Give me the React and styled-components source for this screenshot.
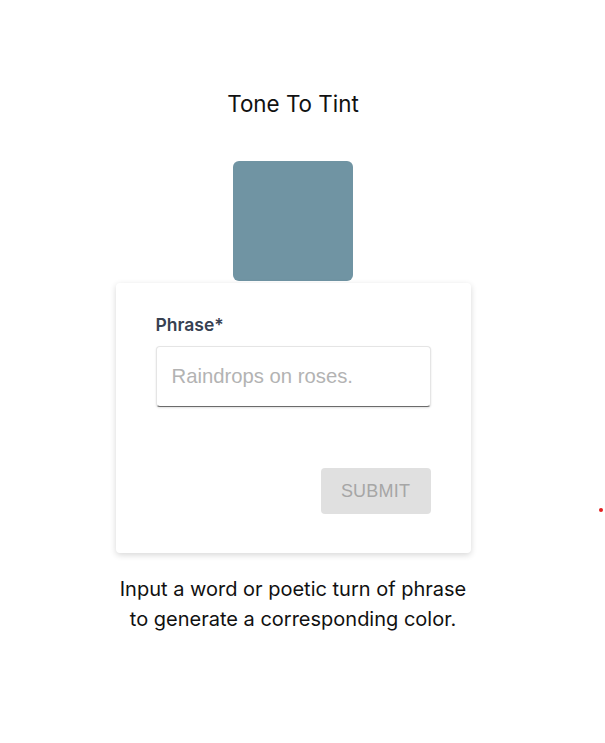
import React, { useState } from 'react';
import styled, { createGlobalStyle } from 'styled-components';

const GlobalStyle = createGlobalStyle`
  html, body {
    margin: 0;
    padding: 0;
    background: #ffffff;
  }
  body {
    font-family: Inter, 'Noto Sans', sans-serif;
  }
`;

const Page = styled.div`
  position: relative;
  width: 586px;
  min-height: 743px;
  display: flex;
  flex-direction: column;
  align-items: center;
  padding-top: 88px;
  box-sizing: border-box;
`;

const Title = styled.h1`
  margin: 0;
  font-family: Inter, sans-serif;
  font-weight: 400;
  font-size: 22.4px;
  line-height: 32px;
  color: #111111;
`;

const Swatch = styled.div`
  width: 120px;
  height: 120px;
  margin-top: 41px;
  border-radius: 6px;
  background: ${props => props.color};
`;

const Card = styled.form`
  width: 355px;
  margin-top: 2px;
  padding: 31px 40px 39px;
  box-sizing: border-box;
  background: #ffffff;
  border-radius: 4px;
  box-shadow: 0 2px 6px rgba(0, 0, 0, 0.16);
  display: flex;
  flex-direction: column;
`;

const Label = styled.label`
  font-family: Inter, sans-serif;
  font-weight: 600;
  font-size: 17.5px;
  line-height: 21px;
  color: #374151;
`;

const TextInput = styled.input`
  margin-top: 11px;
  height: 61px;
  padding: 0 15px;
  box-sizing: border-box;
  border: 1px solid #e5e5e5;
  border-bottom: 1px solid #6b6b6b;
  border-radius: 4px;
  font-family: 'Liberation Sans', Arial, sans-serif;
  font-size: 20.3px;
  color: #222;
  outline: none;
  box-shadow: 0 1px 2px rgba(0, 0, 0, 0.12);

  &::placeholder {
    color: #b3b3b3;
  }
`;

const Actions = styled.div`
  display: flex;
  justify-content: flex-end;
  margin-top: 61px;
`;

const SubmitButton = styled.button`
  width: 110px;
  height: 46px;
  border: none;
  border-radius: 4px;
  background: #e0e0e0;
  color: #a6a6a6;
  font-family: 'Liberation Sans', Arial, sans-serif;
  font-size: 18px;
  letter-spacing: 0.2px;
  cursor: default;
`;

const Description = styled.p`
  margin: 21px 0 0;
  font-family: Inter, sans-serif;
  font-size: 20px;
  line-height: 30px;
  text-align: center;
  color: #111111;
`;

const Dot = styled.span`
  position: absolute;
  left: 599px;
  top: 508px;
  width: 4px;
  height: 4px;
  border-radius: 50%;
  background: #e02020;
`;

export default function App() {
  const [phrase, setPhrase] = useState('');

  return (
    <>
      <GlobalStyle />
      <Page>
        <Title>Tone To Tint</Title>
        <Swatch color="#7094a3" />
        <Card onSubmit={e => e.preventDefault()}>
          <Label htmlFor="phrase">Phrase*</Label>
          <TextInput
            id="phrase"
            value={phrase}
            onChange={e => setPhrase(e.target.value)}
            placeholder="Raindrops on roses."
          />
          <Actions>
            <SubmitButton type="submit" disabled={!phrase}>SUBMIT</SubmitButton>
          </Actions>
        </Card>
        <Description>
          Input a word or poetic turn of phrase
          <br />
          to generate a corresponding color.
        </Description>
        <Dot />
      </Page>
    </>
  );
}
